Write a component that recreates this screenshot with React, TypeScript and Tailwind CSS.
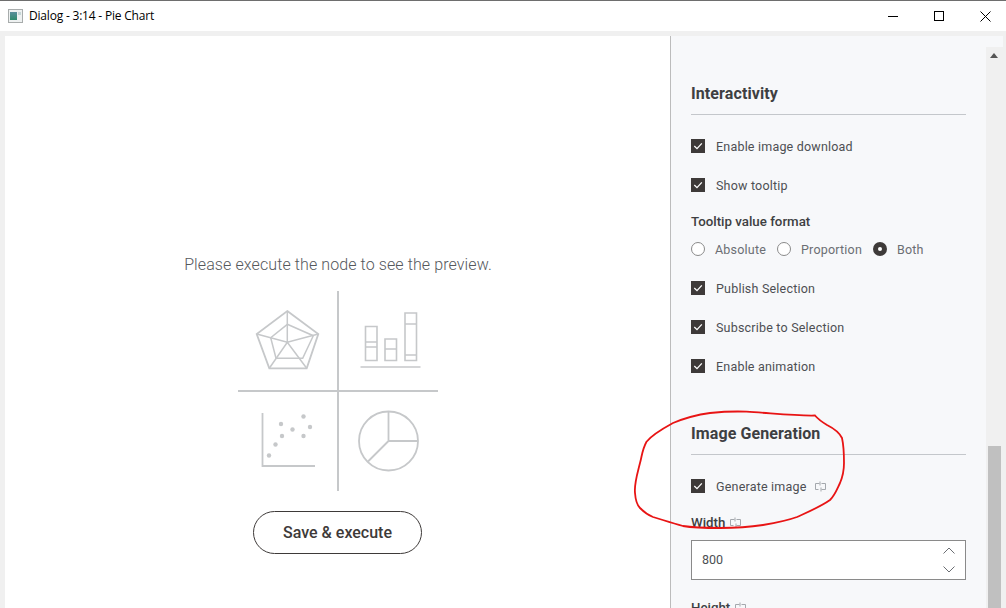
import React from "react";

const Check = ({ label, flow }: { label: string; flow?: boolean }) => (
  <label className="flex items-center h-[14px] text-[12.5px] tracking-[0.2px] text-[#4d4f53]">
    <span className="flex items-center justify-center w-[14px] h-[14px] bg-[#3e3a39] mr-[11px]">
      <svg width="10" height="10" viewBox="0 0 10 10" fill="none">
        <path d="M1.300 5 L4 7.600 L8.800 2.400" stroke="#fff" strokeWidth="1.300" />
      </svg>
    </span>
    <span className="mt-[2px]">{label}</span>
    {flow && <FlowIcon className="ml-[8px]" />}
  </label>
);

const FlowIcon = ({ className }: { className?: string }) => (
  <svg className={className} width="11" height="11" viewBox="0 0 11 11" fill="none" stroke="#a4a8ad" strokeWidth="1">
    <path d="M4.500 2.500H0.500V8.500H3.500M6.500 2.500H10.500V8.500H6.500" />
    <path d="M5 0.500V4.500M6 6.500V10.500" />
  </svg>
);

const Radio = ({ label, on }: { label: string; on?: boolean }) => (
  <label className="flex items-center text-[12.5px] tracking-[0.2px] text-[#6b6e73] mr-[11px]">
    {on ? (
      <span className="flex items-center justify-center w-[14px] h-[14px] rounded-full bg-[#3e3a39] mr-[10px]">
        <span className="w-[4px] h-[4px] rounded-full bg-white" />
      </span>
    ) : (
      <span className="w-[14px] h-[14px] rounded-full border border-[#8a8a8a] bg-white mr-[10px]" />
    )}
    <span className="mt-[2px]">{label}</span>
  </label>
);

const Heading = ({ children }: { children: React.ReactNode }) => (
  <div className="border-b border-[#c4c7cb] h-[32px] pt-[1px] text-[16px] leading-[20px] font-bold tracking-[0.1px] text-[#3e3f42]">{children}</div>
);

const FieldLabel = ({ children }: { children: React.ReactNode }) => (
  <div className="flex items-center h-[16px] pt-[1px] text-[13.3px] leading-[16px] font-medium text-[#3e3f42]">{children}</div>
);

const Preview = () => (
  <svg width="215" height="210" viewBox="0 0 215 210" fill="none" stroke="#c6c8ca" strokeWidth="1.500">
    <path d="M108 6V206M8 106H208" strokeWidth="2" />
    <path d="M57.300 26L88.300 49L76.700 83.300H39.300L26.700 49Z" strokeWidth="1.800" />
    <path d="M57.300 39.300L83.300 50.700L72.700 73.300H46L40.700 52.700Z" />
    <path d="M57.300 26V57.300M26.700 49L57.300 57.300L88.300 49M39.300 83.300L57.300 57.300L76.700 83.300" />
    <path d="M135.500 41.500h11.500v34h-11.500zM135.500 57h11.500M135.500 62h11.500M155 54h11.500v21.500H155zM155 64h11.500M175 28h11.500v47.500H175zM175 39h11.500M175 70h11.500M130.500 82h60" strokeWidth="1.600" />
    <path d="M32.500 128V181H85" strokeWidth="1.800" />
    <g fill="#c6c8ca" stroke="none">
      <circle cx="39" cy="170.500" r="2.200" />
      <circle cx="45.500" cy="159.500" r="2.200" />
      <circle cx="52" cy="151" r="2.200" />
      <circle cx="51" cy="139" r="2.200" />
      <circle cx="62.500" cy="144.500" r="2.200" />
      <circle cx="73.500" cy="131.500" r="2.200" />
      <circle cx="73.500" cy="151" r="2.200" />
      <circle cx="80" cy="142" r="2.200" />
    </g>
    <circle cx="158.500" cy="156" r="29.500" strokeWidth="1.800" />
    <path d="M158.500 126.500V156H188M158.500 156L138 176.500" strokeWidth="1.800" />
  </svg>
);

const App: React.FC = () => {
  return (
    <div className="relative flex flex-col w-[1006px] h-[608px] overflow-hidden bg-[#f0f0f0] font-['Roboto',sans-serif] border-t border-[#6e6e6e]">
      <div className="flex items-center h-[30px] bg-white shrink-0">
        <svg className="ml-[8px] mr-[6px]" width="15" height="14" viewBox="0 0 15 14">
          <defs>
            <linearGradient id="appIcon" x1="0" y1="0" x2="0" y2="1">
              <stop offset="0" stopColor="#5a8f9c" />
              <stop offset="1" stopColor="#2f8a6c" />
            </linearGradient>
          </defs>
          <rect x="0.500" y="0.500" width="14" height="13" fill="#eef1f1" stroke="#a8acac" />
          <rect x="2" y="3" width="7" height="8" fill="url(#appIcon)" />
          <rect x="10" y="3" width="3" height="3" fill="#c6d6d6" />
        </svg>
        <span className="font-['Open_Sans',sans-serif] text-[12px] tracking-[-0.2px] text-black">Dialog - 3:14 - Pie Chart</span>
        <div className="ml-auto flex items-center mr-[-2px]">
          <span className="w-[46px] flex justify-center"><span className="w-[10px] h-px bg-black" /></span>
          <span className="w-[46px] flex justify-center"><span className="w-[10px] h-[10px] border border-black" /></span>
          <span className="w-[46px] flex justify-center">
            <svg width="11" height="11" viewBox="0 0 11 11" stroke="#000" strokeWidth="1"><path d="M0.500 0.500L10.500 10.500M10.500 0.500L0.500 10.500" /></svg>
          </span>
        </div>
      </div>
      <div className="flex flex-1 min-h-0 mt-[5px] ml-[5px]">
        <div className="flex flex-col items-center w-[665px] bg-white pt-[218px]">
          <p className="ml-[1px] text-[16px] leading-[22px] font-light tracking-[0.1px] text-[#55585c]">Please execute the node to see the preview.</p>
          <div className="mt-[9px]"><Preview /></div>
          <button className="mt-[16px] w-[169px] h-[43px] rounded-full border border-[#3e3a39] text-[16px] font-medium text-[#3e3a39]">Save &amp; execute</button>
        </div>
        <div className="w-[316px] bg-[#f7f8fa] border-l border-[#bcbcbc] pl-[20px] pr-[20px] pt-[47px]">
          <Heading>Interactivity</Heading>
          <div className="mt-[24px]"><Check label="Enable image download" /></div>
          <div className="mt-[25px]"><Check label="Show tooltip" /></div>
          <div className="mt-[21px]"><FieldLabel>Tooltip value format</FieldLabel></div>
          <div className="flex items-center mt-[13px] h-[14px]">
            <Radio label="Absolute" />
            <Radio label="Proportion" />
            <Radio label="Both" on />
          </div>
          <div className="mt-[25px]"><Check label="Publish Selection" /></div>
          <div className="mt-[25px]"><Check label="Subscribe to Selection" /></div>
          <div className="mt-[25px]"><Check label="Enable animation" /></div>
          <div className="mt-[50px]"><Heading>Image Generation</Heading></div>
          <div className="mt-[24px]"><Check label="Generate image" flow /></div>
          <div className="mt-[21px]"><FieldLabel>Width<FlowIcon className="ml-[5px]" /></FieldLabel></div>
          <div className="flex items-center justify-between mt-[10px] h-[40px] border border-[#8a8a8a] bg-white pl-[10px] pr-[10px] text-[12.5px] text-[#4d4f53]">
            800
            <svg width="12" height="26" viewBox="0 0 12 26" fill="none" stroke="#6b6e73" strokeWidth="1">
              <path d="M0.500 6.500L6 1L11.500 6.500M0.500 19.500L6 25L11.500 19.500" />
            </svg>
          </div>
          <div className="mt-[19px]"><FieldLabel>Height<FlowIcon className="ml-[5px]" /></FieldLabel></div>
        </div>
        <div className="flex flex-col flex-1">
          <div className="h-[11px] shrink-0 mr-[3px] bg-[#f7f8fa]" />
          <div className="flex flex-col flex-1">
            <div className="flex h-[399px] shrink-0 justify-center pt-[6px] pr-[4px]">
              <svg width="8" height="5" viewBox="0 0 8 5"><path d="M4 0L8 5H0Z" fill="#555" /></svg>
            </div>
            <div className="flex-1 ml-[2px] w-[13px] bg-[#c0c0c0]" />
          </div>
        </div>
      </div>
      <svg className="absolute left-0 top-[-1px] pointer-events-none" width="1006" height="608" fill="none">
        <path d="M815 415.500 C795 416 770 413 746.500 411.700 C730 411 720 412 710 413 C695 415 685 418 673 423 C662 429 652 435 646.500 441.700 C642 450 642 456 640 463 C637 475 634 484 635 493 C635.500 500 637 505 640 508 C644 512 648 515 653 517 C663 520 672 523 683 526 C695 528 708 528 720 528 C735 528 750 527 763 525 C775 523 786 521 797 517 C808 512 820 507 830 500 C835 495 837 489 840 483 C843 476 844 470 844 463 C844 455 844 447 842 438 C839 432 833 428 827 425 C822 422 818 419 815 415.500Z" stroke="#e81414" strokeWidth="1.800" />
      </svg>
    </div>
  );
};

export default App;
